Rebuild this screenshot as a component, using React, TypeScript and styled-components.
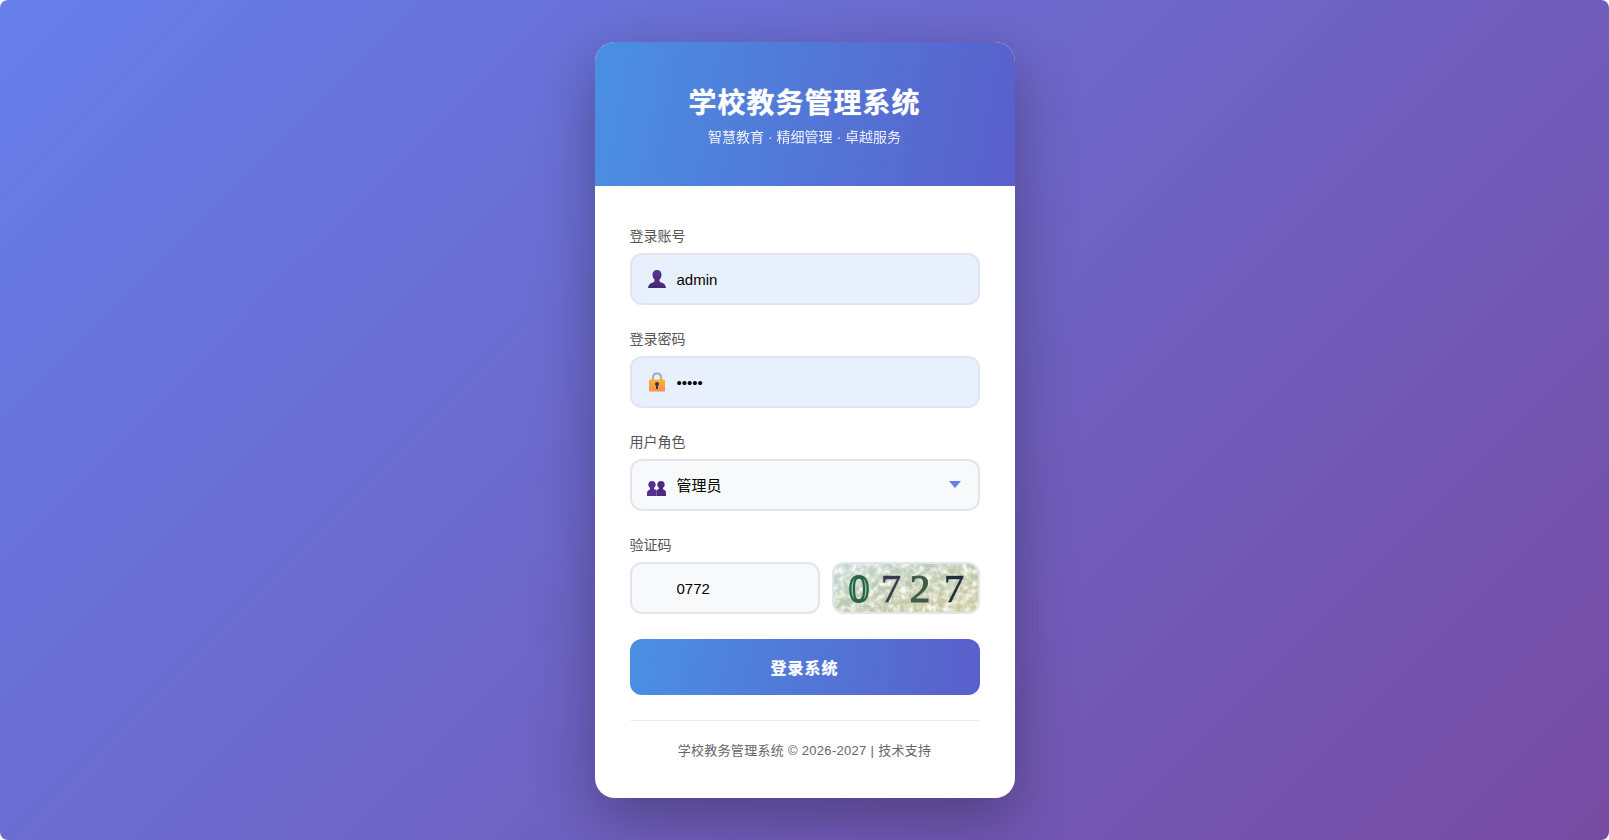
import React from "react";
import styled, { createGlobalStyle } from "styled-components";

const Global = createGlobalStyle`
  html, body { margin: 0; padding: 0; background: #fff; }
  body { font-family: "Liberation Sans", "Noto Sans CJK SC", sans-serif; }
  * { box-sizing: border-box; }
`;

const Page = styled.div`
  height: 840px;
  display: flex;
  align-items: center;
  justify-content: center;
  border-radius: 8px;
  background: linear-gradient(135deg, #667eea 0%, #764ba2 100%);
`;

const Card = styled.main`
  width: 420px;
  height: 756px;
  background: #fff;
  border-radius: 20px;
  overflow: hidden;
  box-shadow: 0 20px 60px rgba(0, 0, 0, 0.3);
`;

const Header = styled.header`
  height: 144px;
  padding-top: 42px;
  text-align: center;
  color: #fff;
  background: linear-gradient(100deg, #4a90e2 0%, #5a5fcb 100%);
`;

const Title = styled.h1`
  margin: 0;
  font-size: 28px;
  line-height: 40px;
  font-weight: 700;
  letter-spacing: 1px;
  text-shadow: 0 0 1px rgba(255, 255, 255, 0.7);
`;

const Subtitle = styled.p`
  margin: 3px 0 0;
  font-size: 14px;
  line-height: 20px;
  opacity: 0.9;
`;

const Form = styled.form`
  padding: 41px 35px 0;
  display: flex;
  flex-direction: column;
`;

const Group = styled.div`
  margin-bottom: 25px;
`;

const Label = styled.label`
  display: block;
  margin-bottom: 8px;
  font-size: 14px;
  line-height: 18px;
  color: #555;
`;

const Field = styled.div`
  position: relative;
  flex: 1;
  min-width: 0;
`;

const IconSlot = styled.span<{ $x?: number; $y?: number }>`
  position: absolute;
  left: ${(p) => 16 + (p.$x ?? 0)}px;
  top: calc(50% + ${(p) => p.$y ?? 0}px);
  transform: translateY(-50%);
  display: flex;
  width: 20px;
  height: 22px;
  align-items: center;
  justify-content: center;
`;

const Input = styled.input<{ $filled?: boolean }>`
  display: block;
  width: 100%;
  height: 52px;
  padding: 0 20px 0 45px;
  border: 2px solid #e1e5ee;
  border-radius: 12px;
  outline: none;
  color: #000;
  font: 15px "Liberation Sans", "Noto Sans CJK SC", sans-serif;
  background: ${(p) => (p.$filled ? "#e8f0fe" : "#f8f9fa")};
`;

const Select = styled.select`
  display: block;
  width: 100%;
  height: 52px;
  padding: 0 40px 0 45px;
  border: 2px solid #e1e5ee;
  border-radius: 12px;
  outline: none;
  appearance: none;
  color: #000;
  font: 15px "Liberation Sans", "Noto Sans CJK SC", sans-serif;
  background: #f8f9fa;
`;

const Caret = styled.span`
  position: absolute;
  right: 19px;
  top: 22px;
  width: 0;
  height: 0;
  border-left: 6px solid transparent;
  border-right: 6px solid transparent;
  border-top: 7px solid #667eea;
  pointer-events: none;
`;

const CaptchaRow = styled.div`
  display: flex;
  gap: 12px;
`;

const CaptchaImage = styled.div`
  flex: 0 0 148px;
  height: 52px;
  border: 2px solid #e1e5ee;
  border-radius: 12px;
  overflow: hidden;
  svg { display: block; margin: -2px; }
`;

const Submit = styled.button`
  height: 56px;
  border: 0;
  border-radius: 12px;
  color: #fff;
  font: 700 16px "Liberation Sans", "Noto Sans CJK SC", sans-serif;
  letter-spacing: 1px;
  text-shadow: 0 0 1px rgba(255, 255, 255, 0.6);
  background: linear-gradient(100deg, #4a90e2 0%, #5a5fcb 100%);
`;

const Footer = styled.footer`
  margin-top: 25px;
  padding-top: 20px;
  border-top: 1px solid #eee;
  text-align: center;
  font-size: 13px;
  line-height: 20px;
  letter-spacing: 0.3px;
  color: #666;
`;

const UserIcon = () => (
  <svg width="18" height="20" viewBox="0 0 18 20">
    <defs>
      <linearGradient id="u" x1="0" y1="0" x2="0" y2="1">
        <stop offset="0" stopColor="#5a3398" />
        <stop offset="1" stopColor="#44276f" />
      </linearGradient>
    </defs>
    <path
      fill="url(#u)"
      d="M9 1c2.900 0 4.500 2 4.500 4.700 0 2-.9 3.800-2 4.800v1.500c0 .8 1 1.300 2.800 2 1.800.7 3.200 1.700 3.700 5H0c.5-3.300 1.900-4.300 3.700-5 1.800-.7 2.800-1.200 2.800-2v-1.500c-1.100-1-2-2.800-2-4.800C4.500 3 6.100 1 9 1z"
    />
  </svg>
);

const LockIcon = () => (
  <svg width="18" height="20" viewBox="0 0 18 20">
    <defs>
      <linearGradient id="l" x1="0" y1="0" x2="0" y2="1">
        <stop offset="0" stopColor="#fdb52e" />
        <stop offset="1" stopColor="#f98d50" />
      </linearGradient>
    </defs>
    <path d="M5 8V5.500C5 3 6.600 1.500 9 1.500s4 1.500 4 4V8" fill="none" stroke="#a9a7bd" strokeWidth="2" />
    <rect x="1" y="7.500" width="16" height="12" rx="1" fill="url(#l)" />
    <circle cx="9" cy="12" r="2" fill="#44325c" />
    <rect x="8" y="12" width="2" height="5" fill="#44325c" />
  </svg>
);

const GroupIcon = () => (
  <svg width="19" height="16" viewBox="0 0 19 16">
    <path
      fill="#553090"
      d="M5 1c2.300 0 3.700 1.500 3.700 3.600 0 1.400-.7 2.600-1.700 3.200v.8c0 .6 1.200 1 2.500 1.500v6.900H0v-3.800c0-2 1-2.900 2-3.300.8-.4 1-.6 1-1v-1C2 7.200 1.300 6 1.300 4.600 1.300 2.500 2.700 1 5 1z"
    />
    <path
      fill="#4d2b84"
      d="M14 1c2.300 0 3.700 1.500 3.700 3.600 0 1.400-.7 2.600-1.700 3.200v1c0 .4.200.6 1 1 1 .4 2 1.300 2 3.300V16H9.500V10c1.300-.5 2.500-.9 2.500-1.500v-.7c-1-.6-1.700-1.800-1.700-3.200C10.300 2.500 11.700 1 14 1z"
    />
  </svg>
);

const CaptchaArt = () => (
  <svg width="148" height="52" viewBox="0 0 148 52">
    <defs>
      <linearGradient id="cg" x1="0" y1="0" x2="0.9" y2="1">
        <stop offset="0" stopColor="#c4dad8" />
        <stop offset="0.45" stopColor="#bccab2" />
        <stop offset="1" stopColor="#cfc99c" />
      </linearGradient>
      <filter id="noise" x="0" y="0" width="100%" height="100%">
        <feTurbulence type="fractalNoise" baseFrequency="0.16" numOctaves="3" seed="11" />
        <feColorMatrix values="0 0 0 0 1  0 0 0 0 1  0 0 0 0 0.96  2.400 0 0 0 -0.85" />
        <feGaussianBlur stdDeviation="0.5" />
      </filter>
      <filter id="soft">
        <feGaussianBlur stdDeviation="0.6" />
      </filter>
    </defs>
    <rect width="148" height="52" fill="url(#cg)" />
    <rect width="148" height="52" filter="url(#noise)" opacity="0.85" />
    <g filter="url(#soft)" fontFamily="'Liberation Serif', serif" fontSize="41" textAnchor="middle">
      <text x="27" y="40" fill="#8fc6a2" stroke="#2a6446" strokeWidth="2.2">0</text>
      <text x="59" y="40" fill="#3d3850" stroke="#3d3850" strokeWidth="0.5">7</text>
      <text x="88" y="40" fill="#3f5c45" stroke="#3f5c45" strokeWidth="1.100">2</text>
      <text x="122" y="40" fill="#1e2d42" stroke="#1e2d42" strokeWidth="0.5">7</text>
    </g>
  </svg>
);

export default function App() {
  return (
    <>
      <Global />
      <Page>
        <Card>
          <Header>
            <Title>学校教务管理系统</Title>
            <Subtitle>智慧教育 · 精细管理 · 卓越服务</Subtitle>
          </Header>
          <Form onSubmit={(e) => e.preventDefault()}>
            <Group>
              <Label>登录账号</Label>
              <Field>
                <IconSlot $x={1}><UserIcon /></IconSlot>
                <Input $filled readOnly defaultValue="admin" />
              </Field>
            </Group>
            <Group>
              <Label>登录密码</Label>
              <Field>
                <IconSlot $x={1}><LockIcon /></IconSlot>
                <Input $filled readOnly type="password" defaultValue="12345" />
              </Field>
            </Group>
            <Group>
              <Label>用户角色</Label>
              <Field>
                <IconSlot $x={1} $y={3}><GroupIcon /></IconSlot>
                <Select defaultValue="admin">
                  <option value="admin">管理员</option>
                </Select>
                <Caret />
              </Field>
            </Group>
            <Group>
              <Label>验证码</Label>
              <CaptchaRow>
                <Field>
                  <Input readOnly defaultValue="0772" />
                </Field>
                <CaptchaImage><CaptchaArt /></CaptchaImage>
              </CaptchaRow>
            </Group>
            <Submit type="submit">登录系统</Submit>
            <Footer>学校教务管理系统 © 2026-2027 | 技术支持</Footer>
          </Form>
        </Card>
      </Page>
    </>
  );
}
